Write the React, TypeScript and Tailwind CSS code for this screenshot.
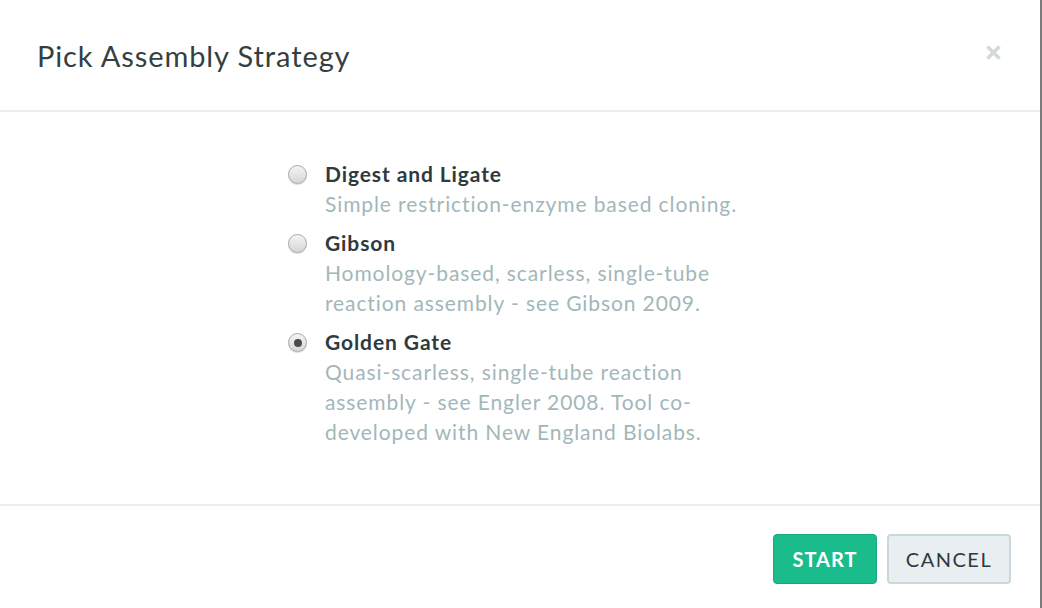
import React, { useState } from 'react';

interface Strategy {
    id: string;
    name: string;
    lines: string[];
}

const strategies: Strategy[] = [
    {
        id: 'digest',
        name: 'Digest and Ligate',
        lines: ['Simple restriction-enzyme based cloning.']
    },
    {
        id: 'gibson',
        name: 'Gibson',
        lines: ['Homology-based, scarless, single-tube', 'reaction assembly - see Gibson 2009.']
    },
    {
        id: 'golden',
        name: 'Golden Gate',
        lines: ['Quasi-scarless, single-tube reaction', 'assembly - see Engler 2008. Tool co-', 'developed with New England Biolabs.']
    }
];

const Radio: React.FC<{ checked: boolean }> = ({ checked }) => (
    <span className="mt-[6px] flex h-[19px] w-[19px] shrink-0 items-center justify-center rounded-full border border-[#a9a9a9] bg-gradient-to-b from-[#f4f4f4] to-[#d6d6d6] shadow-[0_1px_1px_rgba(0,0,0,0.15)]">
        {checked && <span className="h-[8px] w-[8px] rounded-full bg-[#4a4a4a]" />}
    </span>
);

const App: React.FC = () => {
    const [selected, setSelected] = useState('golden');

    return (
        <div className="flex h-[608px] w-[1042px] bg-[#7a7a7a] font-['Lato',sans-serif]">
            <div className="flex h-full w-[1040px] flex-col bg-white">
                {/* Header */}
                <div className="flex h-[112px] shrink-0 items-center justify-between border-b-2 border-[#e9eef0] pl-[37px] pr-[38px]">
                    <h2 className="mt-[2px] text-[29px] font-normal tracking-[0.9px] text-[#343f42]">Pick Assembly Strategy</h2>
                    <button className="text-[#d3d8d9]">
                        <svg width="17" height="17" viewBox="0 0 17 17" className="-mt-[5px]">
                            <path d="M2.5 2.5 L14.5 14.5 M14.5 2.5 L2.5 14.5" stroke="currentColor" strokeWidth="3.6" />
                        </svg>
                    </button>
                </div>

                {/* Body */}
                <div className="flex flex-1 justify-center border-b-2 border-[#e9eef0] pt-[47px]">
                    <div className="ml-[-14px] flex w-[450px] flex-col gap-[9px]">
                        {strategies.map(s => (
                            <label key={s.id} className="flex cursor-pointer gap-[18px]" onClick={() => setSelected(s.id)}>
                                <Radio checked={selected === s.id} />
                                <div>
                                    <div className="text-[21px] font-bold leading-[30px] tracking-[0.9px] text-[#2e3a3d]">{s.name}</div>
                                    {s.lines.map((line, i) => (
                                        <div key={i} className="text-[21px] leading-[30px] tracking-[0.9px] text-[#a2b7ba]">{line}</div>
                                    ))}
                                </div>
                            </label>
                        ))}
                    </div>
                </div>

                {/* Footer */}
                <div className="flex h-[102px] shrink-0 items-start justify-end gap-[10px] pr-[29px] pt-[28px]">
                    <button className="h-[50px] w-[104px] rounded-[4px] border border-[#14a87b] bg-[#1abc8b] text-[20px] font-bold tracking-[1px] text-white">
                        START
                    </button>
                    <button className="h-[50px] w-[124px] rounded-[4px] border-2 border-[#cbd8db] bg-[#e9eff1] text-[20px] tracking-[1.5px] text-[#2e3a3d]">
                        CANCEL
                    </button>
                </div>
            </div>
        </div>
    );
};

export default App;
